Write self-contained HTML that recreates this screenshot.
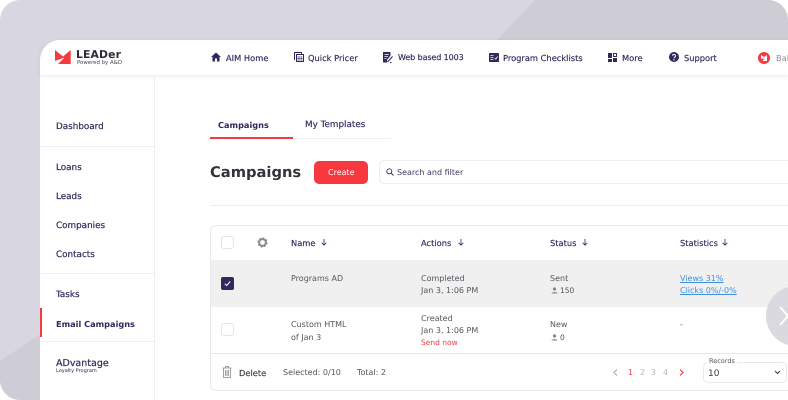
<!DOCTYPE html>
<html><head><meta charset="utf-8">
<style>
*{box-sizing:border-box}
html,body{margin:0;padding:0;width:788px;height:400px;overflow:hidden;background:#fff}
body{position:relative;font-family:"DejaVu Sans","Liberation Sans",sans-serif;color:#2f2a5c;text-rendering:geometricPrecision}
.t{position:absolute;white-space:nowrap;font-size:8.300px;line-height:12px;letter-spacing:0}
.b{position:absolute}
.nav{color:#2f2a5c;-webkit-text-stroke:.15px #2f2a5c}
.side{color:#2f2a5c;-webkit-text-stroke:.2px #2f2a5c}
.g{color:#55555f;font-size:8px}
svg{position:absolute;overflow:visible}
.cb{position:absolute;left:221px;width:13px;height:13px;border:1px solid #e4e4e8;border-radius:3px;background:#fff}
</style></head>
<body>
<svg style="left:0;top:0" width="788" height="400">
<defs><clipPath id="c"><path d="M20 0H768A20 20 0 0 1 788 20V400H20A20 20 0 0 1 0 380V20A20 20 0 0 1 20 0Z"/></clipPath></defs>
<g clip-path="url(#c)">
<rect width="788" height="400" fill="#d8d7e1"/>
<path d="M535 0H788V60H478Z" fill="#cecdd6"/>
<path d="M0 361L42 333V400H0Z" fill="#cecdd6"/>
</g>
</svg>

<div class="b" style="left:40px;top:40px;width:748px;height:360px;background:#fff;border-top-left-radius:20px"></div>
<div class="b" style="left:40px;top:40px;width:748px;height:35px;background:#fff;border-top-left-radius:20px;box-shadow:0 1px 4px rgba(40,40,70,.10)"></div>
<div class="b" style="left:154px;top:75px;width:1px;height:325px;background:#efeff2"></div>

<!-- logo -->
<svg style="left:55px;top:50px" width="16" height="14" viewBox="0 0 16 14">
<path d="M0 0L8 6.500L15.700 0V14H3L9.500 7.500L0 11Z" fill="#f8383f"/>
</svg>
<div class="t" style="left:76px;top:48px;font-size:10.800px;line-height:14px;font-weight:bold;color:#2d2d35;letter-spacing:.15px">LEADer</div>
<div class="t" style="left:77px;top:59px;font-size:5.400px;line-height:8px;color:#44444e">Powered by A&amp;D</div>

<!-- top nav -->
<svg style="left:211px;top:52px" width="10" height="10" viewBox="0 0 10 10"><path d="M5 .5L10 5H8.500V9.500H6V6.500H4V9.500H1.500V5H0Z" fill="#2f2a5c"/></svg>
<div class="t nav" style="left:226px;top:52px">AIM Home</div>
<svg style="left:294px;top:52px" width="10" height="10" viewBox="0 0 10 10"><path d="M1 7.500H.5V.5H7.500V2" fill="none" stroke="#2f2a5c"/><rect x="2.500" y="2.500" width="7" height="7" fill="none" stroke="#2f2a5c"/><path d="M3.500 5H8.500M3.500 6.500H8.500M3.500 8H8.500" stroke="#2f2a5c" stroke-dasharray="1.200 .6"/></svg>
<div class="t nav" style="left:308px;top:52px">Quick Pricer</div>
<svg style="left:383px;top:52px" width="10" height="11" viewBox="0 0 10 11"><path d="M0 0H7.500V3.500L4 8V10.500H0Z" fill="#2f2a5c"/><path d="M1.500 2.500H6M1.500 4.500H5M1.500 6.500H3.500" stroke="#fff" stroke-width=".7"/><path d="M4.500 10L9.500 4.500M7 10.500H8.500" stroke="#2f2a5c" stroke-width="1.100"/></svg>
<div class="t nav" style="left:398px;top:52px;font-size:8px;letter-spacing:-.1px">Web based 1003</div>
<svg style="left:489px;top:53px" width="10" height="9" viewBox="0 0 10 9"><rect width="10" height="9" rx=".8" fill="#2f2a5c"/><path d="M1.500 2.500H4.500M1.500 4.500H4.500M1.500 6.500H4.500M5.700 5L6.800 6.100L8.700 3.500" stroke="#fff" stroke-width=".8" fill="none"/></svg>
<div class="t nav" style="left:503px;top:52px">Program Checklists</div>
<svg style="left:608px;top:53px" width="9" height="9" viewBox="0 0 9 9"><rect width="4" height="5" fill="#2f2a5c"/><rect x="5.500" y=".5" width="3" height="3" fill="none" stroke="#2f2a5c"/><rect y="6" width="4" height="3" fill="#2f2a5c"/><rect x="5" y="5" width="4" height="4" fill="#2f2a5c"/></svg>
<div class="t nav" style="left:622px;top:52px">More</div>
<svg style="left:669px;top:52px" width="10" height="10" viewBox="0 0 10 10"><circle cx="5" cy="5" r="5" fill="#2f2a5c"/><path d="M3.500 3.800A1.500 1.500 0 1 1 5.600 5.200C5.100 5.500 5 5.700 5 6.300" fill="none" stroke="#fff" stroke-width="1"/><circle cx="5" cy="7.700" r=".65" fill="#fff"/></svg>
<div class="t nav" style="left:684px;top:52px">Support</div>
<svg style="left:758px;top:52px" width="12" height="12" viewBox="0 0 12 12"><circle cx="6" cy="6" r="6" fill="#f8383f"/><path d="M3 3L6 5L9 3V9H4.500L6.500 6.500L3 6.800Z" fill="#fff"/></svg>
<div class="t" style="left:776px;top:52px;color:#8d8d96">Bal</div>

<!-- sidebar -->
<div class="t side" style="left:56px;top:121px;font-size:8.800px">Dashboard</div>
<div class="b" style="left:40px;top:146px;width:114px;height:1px;background:#efeff2"></div>
<div class="t side" style="left:56px;top:162px;font-size:8.800px">Loans</div>
<div class="t side" style="left:56px;top:191px;font-size:8.800px">Leads</div>
<div class="t side" style="left:56px;top:220px;font-size:8.800px">Companies</div>
<div class="t side" style="left:56px;top:249px;font-size:8.800px">Contacts</div>
<div class="b" style="left:40px;top:273px;width:114px;height:1px;background:#efeff2"></div>
<div class="t side" style="left:56px;top:289px;font-size:8.800px">Tasks</div>
<div class="b" style="left:40px;top:308px;width:2px;height:29px;background:#f8383f"></div>
<div class="t" style="left:56px;top:318px;font-weight:bold;font-size:8.200px">Email Campaigns</div>
<div class="b" style="left:40px;top:341px;width:114px;height:1px;background:#efeff2"></div>
<div class="t side" style="left:56px;top:358px;font-size:9.500px">ADvantage</div>
<div class="t" style="left:56px;top:368px;font-size:5px;line-height:7px">Loyalty Program</div>

<!-- tabs -->
<div class="t" style="left:218px;top:119px;font-weight:bold;font-size:8.200px">Campaigns</div>
<div class="t nav" style="left:305px;top:119px;font-size:8.800px">My Templates</div>
<div class="b" style="left:210px;top:138px;width:181px;height:1px;background:#efeff2"></div>
<div class="b" style="left:210px;top:137px;width:83px;height:2px;background:#f8383f"></div>

<!-- heading -->
<div class="t" style="left:210px;top:162px;font-size:14.700px;line-height:22px;font-weight:bold;color:#33333b">Campaigns</div>
<div class="b" style="left:314px;top:161px;width:54px;height:23px;background:#f8383f;border-radius:5px"></div>
<div class="t" style="left:328px;top:167px;color:#fff;font-size:8px">Create</div>
<div class="b" style="left:379px;top:160px;width:420px;height:24px;border:1px solid #ececef;border-radius:5px"></div>
<svg style="left:386px;top:168px" width="8" height="8" viewBox="0 0 8 8"><circle cx="3.300" cy="3.300" r="2.500" fill="none" stroke="#2f2a5c" stroke-width=".9"/><path d="M5.200 5.200L7.500 7.500" stroke="#2f2a5c" stroke-width=".9"/></svg>
<div class="t" style="left:397px;top:167px;font-size:8px;color:#3c3866">Search and filter</div>
<div class="b" style="left:210px;top:205px;width:578px;height:1px;background:#ececef"></div>

<!-- table -->
<div class="b" style="left:210px;top:225px;width:600px;height:166px;border:1px solid #e9e9ed;border-radius:6px"></div>
<div class="b" style="left:211px;top:260px;width:577px;height:47px;background:#f0f0f1"></div>
<div class="b" style="left:211px;top:353px;width:577px;height:1px;background:#e6e6ec"></div>

<div class="cb" style="top:236px"></div>
<svg style="left:257px;top:237px" width="11" height="11" viewBox="0 0 11 11"><circle cx="5.500" cy="5.500" r="3.400" fill="none" stroke="#8a8a90" stroke-width="2"/><circle cx="5.500" cy="5.500" r="4.300" fill="none" stroke="#8a8a90" stroke-width="1.600" stroke-dasharray="1.700 1.670"/></svg>
<div class="t nav" style="left:291px;top:237px">Name</div>
<svg style="left:321px;top:239px" width="6" height="7" viewBox="0 0 6 7"><path d="M3 0V6M.7 3.800L3 6.200L5.300 3.800" fill="none" stroke="#2f2a5c" stroke-width=".8"/></svg>
<div class="t nav" style="left:421px;top:237px">Actions</div>
<svg style="left:458px;top:239px" width="6" height="7" viewBox="0 0 6 7"><path d="M3 0V6M.7 3.800L3 6.200L5.300 3.800" fill="none" stroke="#2f2a5c" stroke-width=".8"/></svg>
<div class="t nav" style="left:550px;top:237px">Status</div>
<svg style="left:582px;top:239px" width="6" height="7" viewBox="0 0 6 7"><path d="M3 0V6M.7 3.800L3 6.200L5.300 3.800" fill="none" stroke="#2f2a5c" stroke-width=".8"/></svg>
<div class="t nav" style="left:680px;top:237px">Statistics</div>
<svg style="left:722px;top:239px" width="6" height="7" viewBox="0 0 6 7"><path d="M3 0V6M.7 3.800L3 6.200L5.300 3.800" fill="none" stroke="#2f2a5c" stroke-width=".8"/></svg>

<!-- row 1 -->
<div class="b" style="left:221px;top:277px;width:13px;height:13px;background:#2f2a5c;border-radius:2px"></div>
<svg style="left:224px;top:280px" width="7" height="7" viewBox="0 0 7 7"><path d="M.8 3.800L2.700 5.500L6.200 1.500" fill="none" stroke="#fff" stroke-width="1"/></svg>
<div class="t g" style="left:291px;top:273px">Programs AD</div>
<div class="t g" style="left:421px;top:273px">Completed</div>
<div class="t g" style="left:421px;top:285px">Jan 3, 1:06 PM</div>
<div class="t g" style="left:550px;top:273px">Sent</div>
<svg style="left:551px;top:287px" width="7" height="7" viewBox="0 0 7 7"><circle cx="3.500" cy="2" r="1.600" fill="#85858c"/><path d="M.5 6.500C.5 4.700 6.500 4.700 6.500 6.500Z" fill="#85858c"/></svg>
<div class="t g" style="left:560px;top:285px;font-size:7.500px">150</div>
<div class="t" style="left:680px;top:273px;font-size:8px;color:#3e8fdc;text-decoration:underline">Views 31%</div>
<div class="t" style="left:680px;top:285px;font-size:8px;color:#3e8fdc;text-decoration:underline">Clicks 0%/-0%</div>

<!-- row 2 -->
<div class="cb" style="top:323px"></div>
<div class="t g" style="left:291px;top:319px">Custom HTML</div>
<div class="t g" style="left:291px;top:332px">of Jan 3</div>
<div class="t g" style="left:421px;top:313px">Created</div>
<div class="t g" style="left:421px;top:325px">Jan 3, 1:06 PM</div>
<div class="t" style="left:421px;top:337px;font-size:7.500px;color:#f8383f">Send now</div>
<div class="t g" style="left:550px;top:319px">New</div>
<svg style="left:551px;top:334px" width="7" height="7" viewBox="0 0 7 7"><circle cx="3.500" cy="2" r="1.600" fill="#85858c"/><path d="M.5 6.500C.5 4.700 6.500 4.700 6.500 6.500Z" fill="#85858c"/></svg>
<div class="t g" style="left:560px;top:332px;font-size:7.500px">0</div>
<div class="t g" style="left:680px;top:319px">-</div>

<!-- overlay circle -->
<svg style="left:766px;top:285px" width="22" height="62" viewBox="0 0 22 62"><circle cx="30" cy="31" r="30" fill="#d9d9df"/><path d="M14 22L22 31L14 40" fill="none" stroke="#fff" stroke-width="2"/></svg>

<!-- footer -->
<svg style="left:222px;top:366px" width="10" height="12" viewBox="0 0 10 12"><path d="M.5 2H9.500M3.500 2V.7H6.500V2M1.500 2V11.500H8.500V2M3.500 4V10M5 4V10M6.500 4V10" fill="none" stroke="#8a8a90" stroke-width=".8"/></svg>
<div class="t" style="left:239px;top:367px;color:#3a3a42;font-size:8.300px;-webkit-text-stroke:.15px #3a3a42">Delete</div>
<div class="t g" style="left:283px;top:367px">Selected: 0/10</div>
<div class="t g" style="left:357px;top:367px">Total: 2</div>
<svg style="left:613px;top:369px" width="5" height="7" viewBox="0 0 5 7"><path d="M4 .5L1 3.500L4 6.500" fill="none" stroke="#a8a8ae" stroke-width="1"/></svg>
<div class="t" style="left:628px;top:367px;font-size:8px;color:#f8383f">1</div>
<div class="t" style="left:640px;top:367px;font-size:8px;color:#b5b5ba">2</div>
<div class="t" style="left:651px;top:367px;font-size:8px;color:#b5b5ba">3</div>
<div class="t" style="left:663px;top:367px;font-size:8px;color:#b5b5ba">4</div>
<svg style="left:679px;top:369px" width="5" height="7" viewBox="0 0 5 7"><path d="M1 .5L4 3.500L1 6.500" fill="none" stroke="#f8383f" stroke-width="1.200"/></svg>
<div class="b" style="left:703px;top:362px;width:84px;height:21px;border:1px solid #e9e9ed;border-radius:5px"></div>
<div class="t" style="left:707px;top:357px;padding:0 2px;background:#fff;font-size:6.500px;line-height:9px;color:#55555f">Records</div>
<div class="t" style="left:708px;top:368px;font-size:9px;color:#3a3a42">10</div>
<svg style="left:774px;top:370px" width="7" height="5" viewBox="0 0 7 5"><path d="M1 1L3.500 3.500L6 1" fill="none" stroke="#3a3a42" stroke-width="1"/></svg>
</body></html>
